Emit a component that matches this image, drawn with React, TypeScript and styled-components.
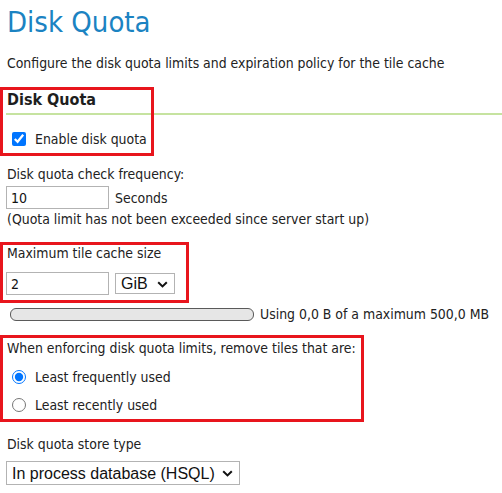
import React from "react";
import styled, { createGlobalStyle } from "styled-components";

const Global = createGlobalStyle`
  body {
    margin: 0;
    background: #ffffff;
    color: #222222;
    font-family: "DejaVu Sans Condensed", "DejaVu Sans", sans-serif;
    font-size: 13.9px;
  }
`;

const Page = styled.div`
  padding: 5px 0 0 6px;
`;

const Title = styled.h1`
  margin: 0;
  font-size: 29px;
  font-weight: normal;
  line-height: 34px;
  color: #1b83c2;
  padding-left: 1px;
`;

const Text = styled.p<{ $mt: number }>`
  margin: ${(p) => p.$mt}px 0 0 1px;
  line-height: 18px;
  white-space: nowrap;
`;

const Section = styled.div`
  position: relative;
`;

const Highlight = styled.div<{ $top: number; $w: number; $h: number }>`
  position: absolute;
  left: -6px;
  top: ${(p) => p.$top}px;
  width: ${(p) => p.$w}px;
  height: ${(p) => p.$h}px;
  border: 3px solid #e8151d;
  box-sizing: border-box;
  pointer-events: none;
`;

const Heading = styled.h2`
  margin: 18px 0 0 0;
  padding: 0 0 3px 1px;
  font-size: 16px;
  font-weight: bold;
  line-height: 20px;
  color: #1e1e1e;
  border-bottom: 2px solid #c6e3a0;
`;

const CheckRow = styled.label<{ $mt: number }>`
  display: flex;
  align-items: center;
  gap: 9px;
  margin-top: ${(p) => p.$mt}px;
  height: 20px;
  white-space: nowrap;
`;

const Box = styled.input`
  margin: 0 0 0 6px;
  width: 14px;
  height: 14px;
  accent-color: #0075ff;
`;

const Row = styled.div<{ $mt: number }>`
  display: flex;
  align-items: center;
  gap: 6px;
  margin-top: ${(p) => p.$mt}px;
  white-space: nowrap;
`;

const TextInput = styled.input`
  box-sizing: border-box;
  width: 103px;
  height: 23px;
  margin: 0;
  padding: 0 4px;
  border: 1px solid #b3b3b3;
  font-family: "DejaVu Sans Condensed", "DejaVu Sans", sans-serif;
  font-size: 14px;
  color: #111;
  outline: none;
`;

const SelectWrap = styled.div`
  position: relative;
  display: inline-flex;
`;

const Select = styled.select<{ $w: number; $h: number }>`
  appearance: none;
  box-sizing: border-box;
  width: ${(p) => p.$w}px;
  height: ${(p) => p.$h}px;
  margin: 0;
  padding: 0 0 0 5px;
  border: 1px solid #b3b3b3;
  border-radius: 0;
  background: #fff;
  font-family: "Liberation Sans", Arial, sans-serif;
  font-size: 16px;
  color: #111;
`;

const Chevron = styled.svg`
  position: absolute;
  right: 7px;
  top: 50%;
  margin-top: -3px;
  pointer-events: none;
`;

const Progress = styled.div`
  box-sizing: border-box;
  width: 244px;
  height: 13px;
  margin-left: 4px;
  border: 1.5px solid #5a5a5a;
  border-radius: 6px;
  background: #e6e6e6;
`;

const Radio = styled.input`
  margin: 0 0 0 6px;
  width: 14px;
  height: 14px;
  accent-color: #0075ff;
`;

function Dropdown({ w, h, options }: { w: number; h: number; options: string[] }) {
  return (
    <SelectWrap>
      <Select $w={w} $h={h} defaultValue={options[0]}>
        {options.map((o) => (
          <option key={o}>{o}</option>
        ))}
      </Select>
      <Chevron width="11" height="7" viewBox="0 0 11 7">
        <path d="M1.2 1.2 L5.5 5.4 L9.8 1.2" fill="none" stroke="#111" strokeWidth="2" />
      </Chevron>
    </SelectWrap>
  );
}

export default function App() {
  return (
    <>
      <Global />
      <Page>
        <Title>Disk Quota</Title>
        <Text $mt={15}>Configure the disk quota limits and expiration policy for the tile cache</Text>

        <Section>
          <Highlight $top={-3} $w={154} $h={69} />
          <Heading>Disk Quota</Heading>
          <CheckRow $mt={14}>
            <Box type="checkbox" defaultChecked />
            Enable disk quota
          </CheckRow>
        </Section>

        <Text $mt={16}>Disk quota check frequency:</Text>
        <Row $mt={3}>
          <TextInput defaultValue="10" />
          Seconds
        </Row>
        <Text $mt={1}>(Quota limit has not been exceeded since server start up)</Text>

        <Section>
          <Highlight $top={-2} $w={189} $h={61} />
          <Text $mt={16}>Maximum tile cache size</Text>
          <Row $mt={10}>
            <TextInput defaultValue="2" />
            <Dropdown w={60} h={21} options={["GiB", "MiB", "TiB"]} />
          </Row>
        </Section>

        <Row $mt={11}>
          <Progress />
          Using 0,0 B of a maximum 500,0 MB
        </Row>

        <Section>
          <Highlight $top={-4} $w={364} $h={87} />
          <Text $mt={17}>When enforcing disk quota limits, remove tiles that are:</Text>
          <CheckRow $mt={10}>
            <Radio type="radio" name="policy" defaultChecked />
            Least frequently used
          </CheckRow>
          <CheckRow $mt={8}>
            <Radio type="radio" name="policy" />
            Least recently used
          </CheckRow>
        </Section>

        <Text $mt={20}>Disk quota store type</Text>
        <Row $mt={8}>
          <Dropdown w={234} h={24} options={["In process database (HSQL)", "H2", "JDBC"]} />
        </Row>
      </Page>
    </>
  );
}
